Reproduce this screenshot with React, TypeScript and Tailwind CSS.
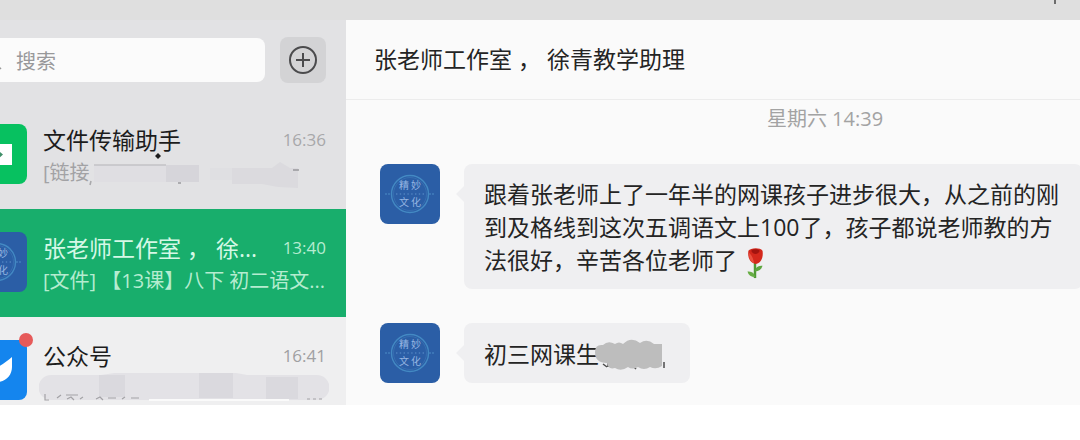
import React from 'react';

type Chat = {
  id: string;
  name: string;
  time: string;
  avatar: React.ReactNode;
  preview: React.ReactNode;
  row: string;
  nameColor: string;
  timeColor: string;
  unread?: boolean;
};

const GroupAvatar: React.FC = () => (
  <svg viewBox="0 0 60 60" className="h-[60px] w-[60px] shrink-0" role="img" aria-label="精妙文化">
    <rect width="60" height="60" rx="8" fill="#2b5ea6" />
    <circle cx="30" cy="30" r="18.5" fill="none" stroke="#4389c3" strokeWidth="1.4" />
    <circle cx="30" cy="30" r="16.5" fill="none" stroke="#3872b4" strokeWidth="0.8" />
    <path d="M5 30h6M49 30h6" stroke="#4c8cc6" strokeWidth="1.2" strokeDasharray="2 1" />
    <path d="M16 30h28" stroke="#5f92cb" strokeWidth="1.2" strokeDasharray="1.4 2.4" />
    <g fill="#94b5e2" fontSize="10" fontFamily='"Noto Sans CJK SC", sans-serif' textAnchor="middle">
      <text x="24" y="25">精</text>
      <text x="36" y="25">妙</text>
      <text x="24" y="42">文</text>
      <text x="36" y="42">化</text>
    </g>
  </svg>
);

const TransferAvatar: React.FC = () => (
  <svg viewBox="0 0 60 60" className="h-[60px] w-[60px] shrink-0" aria-hidden="true">
    <rect width="60" height="60" rx="8" fill="#07c160" />
    <rect x="15" y="20" width="30" height="21" fill="#fff" />
    <path d="M24 29.500h8v-2.500l4 3.500-4 3.500v-2.500h-8z" fill="#3f8f68" />
  </svg>
);

const AccountsAvatar: React.FC = () => (
  <svg viewBox="0 0 60 60" className="h-[60px] w-[60px] shrink-0" aria-hidden="true">
    <rect width="60" height="60" rx="8" fill="#1485ee" />
    <path d="M15 17c6 2 12 6 15 10 4-1 10-6 15-10v10c0 8-6 15-15 15S15 35 15 26z" fill="#fff" />
  </svg>
);

const Rose: React.FC = () => (
  <svg viewBox="0 0 20 34" className="ml-2 inline-block h-8 w-5 align-middle" role="img" aria-label="玫瑰">
    <path d="M10 16v17" stroke="#4f9a35" strokeWidth="2.600" />
    <path d="M10 25c1-4 4-5 8-5-1 4-4 6-8 6z" fill="#5da63f" />
    <path d="M10 31c-1-4-4-5-8-5 1 4 4 6 8 6z" fill="#67ad45" />
    <path d="M3 4c2-3 12-4 15 0 1 6-1 13-7 14C4 17 2 10 3 4z" fill="#d4281c" />
    <path d="M6 4c2-2 7-2 9 0-1 4-7 5-9 0z" fill="#a3140f" />
    <path d="M4 6c3 4 4 6 5 11-4-1-6-6-5-11z" fill="#ea5140" />
  </svg>
);

const chats: Chat[] = [
  {
    id: 'transfer',
    name: '文件传输助手',
    time: '16:36',
    avatar: <TransferAvatar />,
    preview: (
      <>
        <span>[链接</span>
        <svg viewBox="0 0 210 32" className="h-8 w-[210px] shrink-0 overflow-visible" aria-hidden="true">
          <path d="M68-4l3 3-3 3-3-3z" fill="#1c1c1c" />
          <path d="M1 24l-1 4" stroke="#a9a9ac" strokeWidth="1.500" />
          <path d="M4 8h72v17H4z" fill="#dfdee2" />
          <path d="M76 8h33v17H76z" fill="#d6d5da" />
          <path d="M4 8h72" stroke="#b4b3b7" />
          <path d="M120 11h22v12h-22z" fill="#dfdfe2" />
          <path d="M142 11h40l8-6 10 6h8v20l-20-1-16-3h-30z" fill="#dbdade" />
          <path d="M203 13h6M88 26h3" stroke="#77767a" />
        </svg>
      </>
    ),
    row: 'bg-[#e2e2e4] text-[#a2a2a5] pb-5',
    nameColor: 'text-[#1c1c1c]',
    timeColor: 'text-[#a8a8aa]',
  },
  {
    id: 'studio',
    name: '张老师工作室 ， 徐...',
    time: '13:40',
    avatar: <GroupAvatar />,
    preview: '[文件] 【13课】八下 初二语文...',
    row: 'bg-[#18ae6c] text-[#b5ecd0] pb-5',
    nameColor: 'text-[#d5f8e6]',
    timeColor: 'text-[#b5ecd0]',
  },
  {
    id: 'accounts',
    name: '公众号',
    time: '16:41',
    avatar: <AccountsAvatar />,
    preview: (
      <svg viewBox="0 0 290 32" className="-ml-1 h-8 w-[290px] shrink-0" aria-hidden="true">
        <path d="M12 2h50l20-3h110l16 3h70a12 12 0 0 1 0 25H12A12 12 0 0 1 12 2z" fill="#e3e2e6" />
        <path d="M60 2h26v22H60zM160 0h34v25h-34zM227 4h32v22h-32z" fill="#dad9de" />
        <path d="M6 21v6h4M18 25l4-3M27 22h12M28 26l4-2 3 3M41 26l3-2M57 26l4-2 3 3M69 25h8M83 26l3-2M92 25h8M268 26h3M274 26h3M280 26h3" fill="none" stroke="#a3a2a6" strokeWidth="1.200" />
        <path d="M110 27h140" stroke="#fafafa" strokeWidth="2" />
      </svg>
    ),
    row: 'bg-[#efeff0] text-[#a2a2a5]',
    nameColor: 'text-[#1c1c1c]',
    timeColor: 'text-[#a0a0a2]',
    unread: true,
  },
];

const ChatRow: React.FC<{ chat: Chat }> = ({ chat }) => (
  <li>
    <button type="button" className={`flex w-full items-start gap-4 overflow-hidden pt-[22px] pr-5 text-left ${chat.row}`}>
      <span className="relative -ml-[33px] mt-px shrink-0">
        {chat.avatar}
        {chat.unread && <span className="absolute -top-[7px] -right-1.5 h-3.5 w-3.5 rounded-full bg-[#e65a5a]" />}
      </span>
      <span className="min-w-0 flex-1">
        <span className="flex items-center justify-between">
          <span className={`text-[23px] leading-[34px] whitespace-nowrap ${chat.nameColor}`}>{chat.name}</span>
          <span className={`text-[17px] leading-[34px] ${chat.timeColor}`}>{chat.time}</span>
        </span>
        <span className="flex text-xl leading-8 whitespace-nowrap">{chat.preview}</span>
      </span>
    </button>
  </li>
);

const Message: React.FC<{ children: React.ReactNode }> = ({ children }) => (
  <div className="flex items-start">
    <GroupAvatar />
    <svg viewBox="0 0 8 16" className="mt-[22px] ml-4 h-4 w-2 shrink-0" aria-hidden="true">
      <path d="M8 0v16L0 8z" fill="#efeff1" />
    </svg>
    <div className="flex min-h-[60px] items-center rounded-lg bg-[#efeff1] pt-3.5 pr-6 pb-2.5 pl-5 text-[23px] leading-[33px] whitespace-nowrap text-[#242424]">
      {children}
    </div>
  </div>
);

const App: React.FC = () => {
  return (
    <div className="overflow-hidden bg-white font-['Open_Sans','Noto_Sans_CJK_SC',sans-serif]">
      <header className="flex h-5 justify-end bg-[#dfdfdf] pr-6">
        <span className="h-1 w-0.5 bg-[#6c6c6c]" />
      </header>

      <div className="flex">
        <aside className="w-[346px] shrink-0 overflow-hidden bg-[#e2e2e4]">
          <div className="flex items-center gap-[15px] pt-[17px] pr-5 pb-[18px]">
            <label className="relative flex h-11 min-w-0 flex-1 items-center rounded-r-lg bg-[#fbfbfb] pt-1 pl-4">
              <svg viewBox="0 0 20 20" className="absolute -left-4 h-5 w-5" aria-hidden="true">
                <circle cx="8" cy="8" r="6" fill="none" stroke="#999" strokeWidth="1.500" />
                <path d="M13 13l4 4" stroke="#999" strokeWidth="1.500" />
              </svg>
              <input
                type="text"
                aria-label="搜索"
                placeholder="搜索"
                className="w-full bg-transparent text-xl leading-8 outline-none placeholder:text-[#98989a]"
              />
            </label>
            <button type="button" aria-label="添加" className="flex h-[46px] w-[46px] items-center justify-center rounded-lg bg-[#d3d3d5]">
              <svg viewBox="0 0 30 30" className="h-[30px] w-[30px]" fill="none" stroke="#4b4b4d" strokeWidth="2">
                <circle cx="15" cy="15" r="13" />
                <path d="M15 8v14M8 15h14" />
              </svg>
            </button>
          </div>
          <ul>
            {chats.map(chat => (
              <ChatRow key={chat.id} chat={chat} />
            ))}
          </ul>
        </aside>

        <main className="min-w-0 flex-1 overflow-hidden bg-[#fafafa]">
          {/* the chat pane runs on past the right edge of the window */}
          <div className="-mr-56">
            <h1 className="border-b border-[#ececec] py-[22px] pl-7 text-[23px] leading-[35px] text-[#242424]">
              张老师工作室 ， 徐青教学助理
            </h1>
            <p className="pt-1 text-center text-xl leading-[30px] text-[#a3a3a3]">星期六 14:39</p>
            <div className="flex flex-col gap-[34px] pt-[30px] pl-[34px]">
              <Message>
                <p>
                  跟着张老师上了一年半的网课孩子进步很大，从之前的刚
                  <br />
                  到及格线到这次五调语文上100了，孩子都说老师教的方
                  <br />
                  法很好，辛苦各位老师了
                  <Rose />
                </p>
              </Message>
              <Message>
                <p>初三网课生</p>
                <svg viewBox="0 0 71 32" className="-ml-1 h-8 w-[71px]" aria-hidden="true">
                  <path d="M8 25l4 3M13 24v4M37 26l4 4M69 23v6" stroke="#4c4c4c" strokeWidth="1.500" />
                  <path d="M0 13Q0 5 8 6q5-5 12-1 4-3 8 0 8-8 17-1 7-5 14 1h8v22q-6 4-12 1-6 4-12 0-6 3-10 0-7 5-13 1-7 2-8-5Q0 24 0 13z" fill="#bdbdbd" />
                </svg>
              </Message>
            </div>
          </div>
        </main>
      </div>
    </div>
  );
};

export default App;
